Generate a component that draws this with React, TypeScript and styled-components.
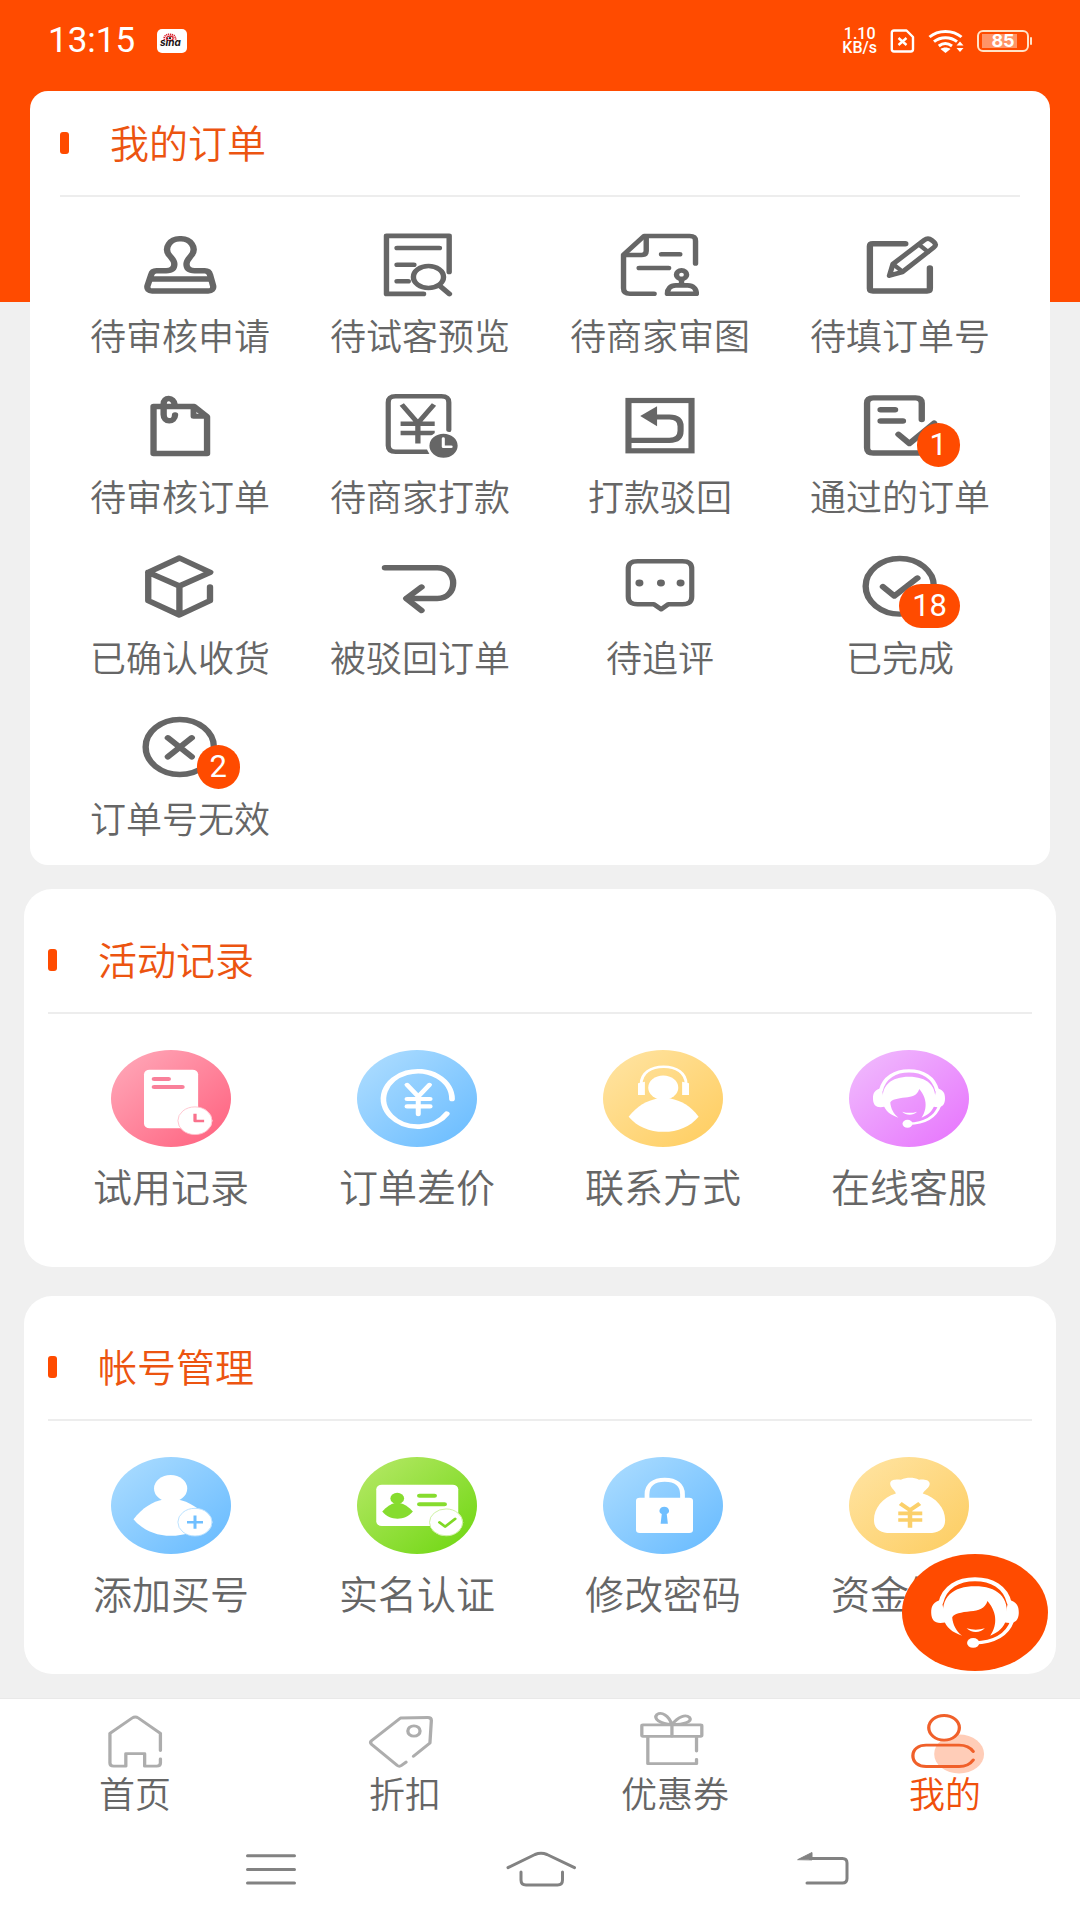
import React from "react";
import styled, { createGlobalStyle } from "styled-components";

const ORANGE = "#ff4b00";
const GREY = "#666666";
const SANS = '"Noto Sans CJK SC", "Noto Sans", sans-serif';
const TEXT_WEIGHT = 350;

const GlobalStyle = createGlobalStyle`
  * { box-sizing: border-box; }
  body {
    margin: 0;
    background: #f0f0f0;
    font-family: ${SANS};
    color: ${GREY};
  }
  a { color: inherit; text-decoration: none; }
  ul { list-style: none; margin: 0; padding: 0; }
  button { border: 0; padding: 0; background: none; cursor: pointer; }
  svg { display: block; flex: none; }
`;

const Page = styled.div`
  display: flex;
  flex-direction: column;
  min-height: 100vh;
  background: linear-gradient(${ORANGE} 302px, #f0f0f0 302px);
`;

/* ---------- status bar ---------- */

const StatusBar = styled.header`
  display: flex;
  align-items: center;
  justify-content: space-between;
  height: 91px;
  padding: 0 48px 9px;
  color: #fff;
`;

const StatusGroup = styled.div<{ $gap: number }>`
  display: flex;
  align-items: center;
  gap: ${(p) => p.$gap}px;
`;

const Clock = styled.time`
  font: 400 35px/40px Roboto, sans-serif;
`;

const Speed = styled.div`
  display: flex;
  flex-direction: column;
  align-items: center;
  font: 500 16px/14px Roboto, sans-serif;
`;

const Battery = styled.div`
  display: flex;
  align-items: center;
  gap: 1px;
`;

const BatteryBody = styled.div`
  display: flex;
  align-items: center;
  justify-content: center;
  width: 52px;
  height: 22px;
  border: 2px solid #ffe3c8;
  border-radius: 6px;
  background: linear-gradient(90deg, #ff9467 35px, transparent 35px) 3px 2px / 42px 14px no-repeat;
  font: 700 18px/18px Inter, sans-serif;
`;

const BatteryTip = styled.div`
  width: 2px;
  height: 8px;
  border-radius: 1px;
  background: #ffe3c8;
`;

/* ---------- cards ---------- */

const Main = styled.main`
  display: flex;
  flex-direction: column;
  padding: 0 24px 24px;
`;

const OrdersCard = styled.section`
  margin: 0 6px 24px;
  padding: 0 30px 26px;
  border-radius: 18px;
  background: #fff;
`;

const ServiceCard = styled.section`
  padding: 19px 24px 58px;
  border-radius: 28px;
  background: #fff;

  & + & {
    margin-top: 29px;
  }
`;

const CardHeading = styled.div`
  display: flex;
  align-items: center;
  gap: 41px;
  height: 106px;
  border-bottom: 2px solid #ededed;

  &::before {
    content: "";
    width: 9px;
    height: 22px;
    border-radius: 3px;
    background: ${ORANGE};
  }
`;

const Title = styled.h2`
  margin: 0;
  padding-bottom: 5px;
  font-size: 39px;
  font-weight: ${TEXT_WEIGHT};
  line-height: 48px;
  color: #ec5410;
`;

const OrderGrid = styled.ul`
  display: grid;
  grid-template-columns: repeat(4, 1fr);
  row-gap: 36px;
  padding-top: 34px;
`;

const OrderLink = styled.a`
  display: flex;
  flex-direction: column;
  align-items: center;
  gap: 13px;
  font-size: 36px;
  font-weight: ${TEXT_WEIGHT};
  line-height: 44px;
`;

const IconBox = styled.span`
  position: relative;
`;

const Badge = styled.span`
  position: absolute;
  top: 31px;
  right: -20px;
  min-width: 43px;
  padding: 0 13px;
  border-radius: 22px;
  background: ${ORANGE};
  color: #fff;
  text-align: center;
  font: 400 31px/44px Roboto, sans-serif;
`;

const ServiceGrid = styled.ul`
  display: grid;
  grid-template-columns: repeat(4, 1fr);
  padding-top: 36px;
`;

const ServiceLink = styled.a`
  display: flex;
  flex-direction: column;
  align-items: center;
  gap: 14px;
  font-size: 39px;
  font-weight: ${TEXT_WEIGHT};
  line-height: 48px;
`;

/* ---------- footer ---------- */

const Footer = styled.footer`
  border-top: 1px solid #e9e9e9;
  background: #fff;
`;

const TabBar = styled.nav`
  display: grid;
  grid-template-columns: repeat(4, 1fr);
  padding: 11px 0 6px;
`;

const Tab = styled.a<{ $active?: boolean }>`
  display: flex;
  flex-direction: column;
  align-items: center;
  font-size: 36px;
  font-weight: ${TEXT_WEIGHT};
  line-height: 32px;
  color: ${(p) => (p.$active ? "#f0500c" : GREY)};
`;

const SystemNav = styled.nav`
  display: grid;
  grid-template-columns: repeat(3, 1fr);
  justify-items: center;
  padding: 36px 12.5% 30px;
`;

const SupportButton = styled.button`
  position: fixed;
  right: 32px;
  bottom: 249px;
`;

/* ---------- line icons ---------- */

const Line = ({ w = 5, children }: { w?: number; children: React.ReactNode }) => (
  <svg
    width="80"
    height="68"
    viewBox="0 0 68 68"
    preserveAspectRatio="none"
    fill="none"
    stroke={GREY}
    strokeWidth={w}
    strokeLinecap="round"
    strokeLinejoin="round"
    aria-hidden="true"
  >
    {children}
  </svg>
);

const StampIcon = (
  <Line w={5.4}>
    <path d="M34.3 7.800a10.600 10.600 0 0 0-9.400 16.500c2.200 3.200 4.300 5 4.300 8.800 0 4.600-2.500 6.600-7 6.600H14c-3 0-4 1.500-4.500 4L6.300 55c-.4 3 1 5 4 5H58c3 0 4.600-2 4.200-5l-2.700-11.300c-.5-2.500-2-4-4.500-4h-8.500c-4.500 0-7-2-7-6.600 0-3.800 2-5.600 4.200-8.800A10.600 10.600 0 0 0 34.300 7.800z" />
    <path d="M9.500 48H59" />
  </Line>
);

const PreviewIcon = (
  <Line w={4.6}>
    <path d="M58.800 41V4.900H5.500v58H37" />
    <path d="M14.500 17h36M14.500 33.700h14.300M14.500 50.300H24" />
    <ellipse cx="41.200" cy="46" rx="12.800" ry="11" />
    <path d="M51 55l8 8" />
  </Line>
);

const MerchantReviewIcon = (
  <Line w={4.6}>
    <path d="M64.200 32.500V10c0-3.500-1.500-5-5-5H20.500L3 23.700v33.500c0 3.800 1.800 5.500 5.500 5.500h20.500" />
    <path d="M22.300 6v14c0 2.800-1.200 4-4 4H4" />
    <path d="M35.300 23.300h15.500M16.300 37h25" />
    <circle cx="52.300" cy="43.700" r="4.300" />
    <path d="M52.300 48v6M40.300 62.800c0-5 2.500-8.400 7.200-8.400h10c4.700 0 7.400 3.400 7.400 8.400z" />
  </Line>
);

const EditIcon = (
  <Line w={5.4}>
    <path d="M38.500 12.700H11c-1.700 0-2.600.9-2.600 2.600V57.500c0 1.700.9 2.500 2.600 2.500h46c1.600 0 2.400-.8 2.400-2.500V37" />
    <path strokeWidth="4.500" d="M25 44.700l3-11.700L54.700 9c2.200-1.900 4-1.900 6 0l2 1.900c2 2 2 3.700-.2 5.700L36 41z" />
    <path strokeWidth="3.800" d="M50 13.500l8 7.500M28.500 33.500l7.500 7" />
  </Line>
);

const ClipIcon = (
  <Line w={5.4}>
    <path d="M46 14.500H11.500v47H57V24.700z" />
    <path strokeWidth="5" d="M45.500 16v8.300H56" />
    <path d="M29.400 12.500c-.8-8-9.300-8-9.300-.5v10.500c0 8.300 9.400 8.300 9.700.5" />
  </Line>
);

const PayWaitIcon = (
  <Line w={4.4}>
    <path d="M58.500 38V10.500c0-4.300-2-6.300-6.300-6.300H13.300C9 4.200 7 6.200 7 10.500v43c0 4.300 2 6.300 6.300 6.300H41" />
    <path strokeLinecap="butt" strokeWidth="4.500" d="M18.500 12.500L32.200 31l13.700-18.500M32.200 30v21.500M17.500 31.700h29M17.500 41h29" />
    <circle cx="54" cy="53.700" r="13.200" fill={GREY} stroke="#fff" strokeWidth="2.400" />
    <path stroke="#fff" strokeWidth="2.600" d="M53.800 46.500v8.300h6.700" />
  </Line>
);

const RejectPayIcon = (
  <Line w={5.2}>
    <rect x="7.200" y="8.500" width="53.600" height="50.300" strokeLinejoin="miter" />
    <path d="M8 48.300h34c6.500 0 9.500-3.300 9.500-9.500v-4.500c0-6.200-3-9.300-9.500-9.300H30" />
    <path fill={GREY} stroke="none" d="M17.200 24l14.300-9.800v20z" />
  </Line>
);

const PassedIcon = (
  <Line w={5.4}>
    <path d="M52.500 27.500V11.200c0-3.600-1.700-5.300-5.300-5.300H11.300C7.700 5.900 6 7.600 6 11.200v44.500c0 3.600 1.700 5.300 5.300 5.300H52" />
    <path d="M17.500 17.700h12.300M17.500 29h19M32.700 42.300L42 51.500l21-20.300" />
  </Line>
);

const BoxIcon = (
  <Line w={5.4}>
    <path d="M59.700 19.300L33.500 33 7 19.300 33.500 5zM7 19.300v28.400L33.500 62l26-14.300V34M33.500 33v28" />
  </Line>
);

const RejectedIcon = (
  <Line w={5.4}>
    <path d="M4.200 14.700h44.500c18 0 18 30.800 0 30.800H23" />
    <path d="M35.300 34L22.300 45.500l13 12" />
  </Line>
);

const ReviewIcon = (
  <Line w={4.4}>
    <path d="M15 8.300h38c5.600 0 8 2.400 8 7.700v27.500c0 5.300-2.400 7.700-8 7.700H41L35 56.300l-6.200-5.100H15c-5.600 0-8-2.400-8-7.700V16c0-5.300 2.400-7.700 8-7.700z" />
    <g fill={GREY} stroke="none">
      <circle cx="16.500" cy="30" r="3.400" />
      <circle cx="34.800" cy="30" r="3.400" />
      <circle cx="51.500" cy="30" r="3.400" />
    </g>
  </Line>
);

const DoneIcon = (
  <Line w={5.4}>
    <ellipse cx="33.800" cy="33.300" rx="29" ry="27.800" />
    <path d="M19.500 33.700l9.700 9.300L48.800 25" />
  </Line>
);

const InvalidIcon = (
  <Line w={5.4}>
    <ellipse cx="33.800" cy="33" rx="29" ry="27.500" />
    <path d="M23.700 23.800l20.300 19M44 23.800l-20.300 19" />
  </Line>
);

/* ---------- round icons ---------- */

const Disc = ({
  id,
  from,
  to,
  width = 120,
  height = 97,
  children,
}: {
  id: string;
  from: string;
  to: string;
  width?: number;
  height?: number;
  children: React.ReactNode;
}) => (
  <svg
    width={width}
    height={height}
    viewBox="0 0 96 96"
    preserveAspectRatio="none"
    fill="none"
    strokeLinecap="round"
    strokeLinejoin="round"
    aria-hidden="true"
  >
    <defs>
      <linearGradient id={id} x1="0.15" y1="0.15" x2="0.85" y2="0.85">
        <stop offset="0" stopColor={from} />
        <stop offset="1" stopColor={to} />
      </linearGradient>
    </defs>
    <circle cx="48" cy="48" r="48" fill={`url(#${id})`} />
    {children}
  </svg>
);

const HeadsetLady = (
  <g>
    <path
      fill="#fff"
      d="M27.500 54C24.500 35 34 26.500 48 26.500S71.500 35 68.500 54c-1.500 6-5 10.500-10.500 13 4-7 5.500-18-1.800-28.500C54.500 45 50.500 46.300 45 47c-6 .8-11 2-12 5 .5 6 2.500 11 6.500 15-6.500-2.500-10.500-7-12-13z"
    />
    <path fill="#fff" d="M26 37.500c-5 1.500-7 4.500-6.800 11 .2 7 3.300 9.500 9.800 7.500zM70 37.500c5 1.500 7 4.500 6.800 11-.2 7-3.300 9.500-9.800 7.500z" />
    <path stroke="#fff" strokeWidth="3.200" d="M25.500 40C28 27 37 20.700 48 20.700S68 27 70.500 40" />
    <path stroke="#fff" strokeWidth="2.400" d="M72.500 55C69 67 60 72.500 47.500 73" />
    <circle cx="46.800" cy="73" r="4" fill="#fff" />
    <path fill="#fff" d="M42.500 61c4 1.600 8 1.600 12 0-3 4-9 4-12 0z" />
  </g>
);

const TrialIcon = (
  <Disc id="trial" from="#ffa0b2" to="#ff6a86">
    <rect x="26.400" y="19.500" width="43.300" height="58" rx="4.500" fill="#fff" />
    <path stroke="#f9809a" strokeWidth="4" d="M34.500 28.700h11.500M34.500 36.700H57" />
    <circle cx="67.200" cy="70" r="13.700" fill="#fff" stroke="#ffc2cd" strokeWidth="0.800" />
    <path stroke="#f9718c" strokeWidth="2.600" strokeLinecap="butt" d="M67.200 63v7.300h7.300" />
  </Disc>
);

const PriceIcon = (
  <Disc id="price" from="#a6d9ff" to="#72c0ff">
    <path stroke="#fff" strokeWidth="4.600" d="M76 48.500A27.400 27.400 0 1 0 71.800 63" />
    <path stroke="#fff" strokeWidth="4" d="M40 34.500L49 46l9-11.500M49 46v17.500M40 48.500h18.500M40 55.800h18.500" />
  </Disc>
);

const ContactIcon = (
  <Disc id="contact" from="#ffe19a" to="#ffd068">
    <circle cx="48.200" cy="37.300" r="12" fill="#fff" />
    <path fill="#fff" d="M20.500 66c6.500-10.500 15-16 23-18h10.500c8 2 16.500 7.500 22.500 18-7 10-16.500 15-28 15s-21-5-28-15z" />
    <path stroke="#fff" strokeWidth="2.400" d="M30.500 34c0-11.500 8-17.500 18-17.500s18 6 18 17.500" />
    <path fill="#fff" d="M28 33l5.500-1.500v13H28zM68.800 33l-5.500-1.500v13h5.500z" />
  </Disc>
);

const OnlineIcon = (
  <Disc id="online" from="#efb3fd" to="#e87dfd">
    {HeadsetLady}
  </Disc>
);

const AddBuyerIcon = (
  <Disc id="buyer" from="#a3d8ff" to="#70bfff">
    <circle cx="47.700" cy="31.200" r="13.300" fill="#fff" />
    <path fill="#fff" d="M18 61.500c7-11 15-17.500 24-19.500h11.500C62 44 71 50.500 78 61.500 70.500 72.500 60 78 48 78s-22.500-5.500-30-16.500z" />
    <circle cx="67.200" cy="64.500" r="13.700" fill="#fff" stroke="#b5dfff" strokeWidth="0.800" />
    <path stroke="#70bfff" strokeWidth="2.400" strokeLinecap="butt" d="M67.200 58v13M60.800 64.500h12.800" />
  </Disc>
);

const IdentityIcon = (
  <Disc id="identity" from="#ade65c" to="#78d91c">
    <rect x="15.400" y="27.400" width="65.600" height="41" rx="4.500" fill="#fff" />
    <g fill="#86dc2e">
      <circle cx="32.200" cy="41" r="5.500" />
      <path d="M20.200 54c3.500-5 7-7.500 10-8.500h4c3.500 1 7 3.500 10.500 8.500-3.500 5-7.500 7-12.300 7s-8.900-2-12.200-7z" />
    </g>
    <path stroke="#86dc2e" strokeWidth="4" d="M50 38.300h12M50 46.700h20" />
    <circle cx="71.300" cy="64.700" r="13.300" fill="#fff" stroke="#c9f09a" strokeWidth="0.800" />
    <path stroke="#80d926" strokeWidth="2.400" d="M66 64.700l4.500 4.300 8-7.800" />
  </Disc>
);

const PasswordIcon = (
  <Disc id="password" from="#a3d8ff" to="#70bfff">
    <rect x="26.400" y="40.300" width="45.600" height="35" rx="3" fill="#fff" />
    <path stroke="#fff" strokeWidth="3.800" d="M35.200 42v-5c0-9.500 5.500-14.500 14.200-14.500S63.600 27.500 63.600 37v5" />
    <path fill="#70bfff" d="M49 49.300a3.900 3.900 0 0 1 2 7.200l.9 9.500h-5.800l.9-9.500a3.900 3.900 0 0 1 2-7.200z" />
  </Disc>
);

const FundsIcon = (
  <Disc id="funds" from="#ffe19a" to="#fdd06a">
    <path
      fill="#fff"
      d="M37.500 36c-1-3.500-5-6-4.500-10.500.5-3.200 5-3.500 8.500-3 5-2.500 10-2.500 14.500 0 4-.5 8 .2 8.500 3.500.5 4-4 6.500-5.500 10C70 40 77 51 76.900 62c0 9-4.500 13.300-13 13.300H33c-8.500 0-13-4.300-13-13.300 0-11 6.500-22 17.500-26z"
    />
    <path stroke="#fbd06a" strokeWidth="3.600" strokeLinecap="butt" d="M41 46l7.800 6.500L56.600 46M48.800 52v18M39.400 55.800h19.200M39.400 62.300h19.200" />
  </Disc>
);

/* ---------- tab icons ---------- */

const TabGlyph = ({ color = "#adadad", children }: { color?: string; children: React.ReactNode }) => (
  <svg
    width="80"
    height="66"
    viewBox="0 0 68 66"
    preserveAspectRatio="none"
    fill="none"
    stroke={color}
    strokeWidth="2.800"
    strokeLinecap="round"
    strokeLinejoin="round"
    aria-hidden="true"
  >
    {children}
  </svg>
);

const HomeTabIcon = (
  <TabGlyph>
    <path d="M55.600 40.500V23.300L36.800 8q-2.600-2-5.200 0L12.700 23.300V53q0 3.200 3.200 3.200h10.300V43.700h16v12.500h10.200q3.200 0 3.200-3.200v-4" />
  </TabGlyph>
);

const DiscountTabIcon = (
  <TabGlyph>
    <path d="M41.200 46.300l14-13.300 1.200-22.500q0-3-3-3L30.200 8 5.500 30.700q-1.500 1.800 0 3.500L27.500 55.500q1.700 1.500 3.400 0l4-3.400" />
    <circle cx="41.600" cy="21" r="5.200" />
  </TabGlyph>
);

const CouponTabIcon = (
  <TabGlyph>
    <rect x="5.800" y="14.900" width="51" height="11.400" rx="1" />
    <path d="M31.400 15v11M10.900 27v26.700h41.400v-4.200M52.300 27v14M31.400 14.500C28.500 5 22.500 1.500 18.700 4.500c-3.500 4 2.500 9.500 12.700 10zM31.400 14.500c5.500-8 11.500-10.500 15-7 2.500 4-4 7-15 7z" />
  </TabGlyph>
);

const MineTabIcon = (
  <TabGlyph color="#f0602a">
    <ellipse cx="46" cy="44" rx="21.200" ry="19.500" fill="#ffcdb8" stroke="none" />
    <ellipse cx="33.200" cy="17.800" rx="13" ry="12.300" fill="#fff" />
    <path d="M58 41.500c-2.500-4-6-6.300-12-6.300H18c-6.500 0-11.300 4-11.300 10.600S11.500 56.500 18 56.500h28c6 0 9.500-2.500 12-6.500" />
  </TabGlyph>
);

/* ---------- system icons ---------- */

const SystemGlyph = ({ children }: { children: React.ReactNode }) => (
  <svg width="80" height="40" viewBox="0 0 80 40" fill="none" stroke="#828282" strokeWidth="3" strokeLinecap="round" strokeLinejoin="round" aria-hidden="true">
    {children}
  </svg>
);

const SinaMark = () => (
  <svg width="30" height="24" viewBox="0 0 30 24" role="img" aria-label="sina">
    <rect width="30" height="24" rx="5" fill="#fff" />
    <g fill="none" stroke="#d8202a" strokeWidth="1.200">
      <path d="M7.500 11C6.500 7 9 5.200 13 5.400S19 7.500 18.500 11" strokeWidth="1.800" strokeDasharray="1.200 0.700" />
      <ellipse cx="12.800" cy="9.300" rx="3.400" ry="2.200" />
    </g>
    <circle cx="13" cy="9.200" r="1.100" fill="#111" />
    <text x="3" y="17" fontFamily="Inter, sans-serif" fontSize="10" fontWeight="700" fontStyle="italic" fill="#1b1313">
      sina
    </text>
  </svg>
);

const SimIcon = () => (
  <svg width="25" height="24" viewBox="0 0 25 24" fill="none" stroke="#fff" strokeWidth="2.400" strokeLinejoin="round" aria-hidden="true">
    <path d="M4 1.500h12.500L23 8v12.300q0 2.200-2.200 2.200H4q-2.200 0-2.200-2.200V3.700Q1.800 1.500 4 1.500z" />
    <path d="M8.500 9l8 7M16.500 9l-8 7" />
  </svg>
);

const WifiIcon = () => (
  <svg width="36" height="24" viewBox="0 0 36 24" fill="none" stroke="#fff" strokeWidth="3" aria-hidden="true">
    <path d="M1.500 8C10 .5 25 .5 33.500 8M6 12.700c6.500-5.400 16.500-5.400 23 0M10.800 17c4-3.200 9-3.200 13.200 0" />
    <path fill="#fff" stroke="none" d="M12.500 20c3-2 7-2 10 0l-5 4zM32 12.500l3.500 4h-7zM32 23l3.500-4h-7z" />
  </svg>
);

/* ---------- data ---------- */

const orders: { label: string; icon: React.ReactNode; count?: number }[] = [
  { label: "待审核申请", icon: StampIcon },
  { label: "待试客预览", icon: PreviewIcon },
  { label: "待商家审图", icon: MerchantReviewIcon },
  { label: "待填订单号", icon: EditIcon },
  { label: "待审核订单", icon: ClipIcon },
  { label: "待商家打款", icon: PayWaitIcon },
  { label: "打款驳回", icon: RejectPayIcon },
  { label: "通过的订单", icon: PassedIcon, count: 1 },
  { label: "已确认收货", icon: BoxIcon },
  { label: "被驳回订单", icon: RejectedIcon },
  { label: "待追评", icon: ReviewIcon },
  { label: "已完成", icon: DoneIcon, count: 18 },
  { label: "订单号无效", icon: InvalidIcon, count: 2 },
];

const services = [
  {
    title: "活动记录",
    items: [
      { label: "试用记录", icon: TrialIcon },
      { label: "订单差价", icon: PriceIcon },
      { label: "联系方式", icon: ContactIcon },
      { label: "在线客服", icon: OnlineIcon },
    ],
  },
  {
    title: "帐号管理",
    items: [
      { label: "添加买号", icon: AddBuyerIcon },
      { label: "实名认证", icon: IdentityIcon },
      { label: "修改密码", icon: PasswordIcon },
      { label: "资金管理", icon: FundsIcon },
    ],
  },
];

const tabs = [
  { label: "首页", icon: HomeTabIcon },
  { label: "折扣", icon: DiscountTabIcon },
  { label: "优惠券", icon: CouponTabIcon },
  { label: "我的", icon: MineTabIcon, active: true },
];

export default function App() {
  return (
    <Page>
      <GlobalStyle />
      <StatusBar>
        <StatusGroup $gap={22}>
          <Clock>13:15</Clock>
          <SinaMark />
        </StatusGroup>
        <StatusGroup $gap={13}>
          <Speed>
            <span>1.10</span>
            <span>KB/s</span>
          </Speed>
          <SimIcon />
          <WifiIcon />
          <Battery>
            <BatteryBody>85</BatteryBody>
            <BatteryTip />
          </Battery>
        </StatusGroup>
      </StatusBar>

      <Main>
        <OrdersCard>
          <CardHeading>
            <Title>我的订单</Title>
          </CardHeading>
          <OrderGrid>
            {orders.map((o) => (
              <li key={o.label}>
                <OrderLink href="#">
                  <IconBox>
                    {o.icon}
                    {o.count !== undefined && <Badge>{o.count}</Badge>}
                  </IconBox>
                  {o.label}
                </OrderLink>
              </li>
            ))}
          </OrderGrid>
        </OrdersCard>

        {services.map((s) => (
          <ServiceCard key={s.title}>
            <CardHeading>
              <Title>{s.title}</Title>
            </CardHeading>
            <ServiceGrid>
              {s.items.map((i) => (
                <li key={i.label}>
                  <ServiceLink href="#">
                    {i.icon}
                    {i.label}
                  </ServiceLink>
                </li>
              ))}
            </ServiceGrid>
          </ServiceCard>
        ))}
      </Main>

      <SupportButton type="button" aria-label="在线客服">
        <Disc id="support" from={ORANGE} to={ORANGE} width={146} height={117}>
          {HeadsetLady}
        </Disc>
      </SupportButton>

      <Footer>
        <TabBar>
          {tabs.map((t) => (
            <Tab key={t.label} href="#" $active={t.active}>
              {t.icon}
              {t.label}
            </Tab>
          ))}
        </TabBar>
        <SystemNav>
          <button type="button" aria-label="菜单">
            <SystemGlyph>
              <path d="M17.500 5.700h47M17.500 19.400h47M17.500 33h47" />
            </SystemGlyph>
          </button>
          <button type="button" aria-label="主页">
            <SystemGlyph>
              <path d="M8 17.700L35 4.500q6-2.500 12 0l27.500 13.200M21 22v8q0 5 5 5h31.500q5 0 5-5v-8" />
            </SystemGlyph>
          </button>
          <button type="button" aria-label="返回">
            <SystemGlyph>
              <path d="M37 33h35.500q4.500 0 4.500-4.500V13q0-4.500-4.500-4.500H40" />
              <path fill="#828282" strokeWidth="1" d="M28 9.500l14-7v7z" />
            </SystemGlyph>
          </button>
        </SystemNav>
      </Footer>
    </Page>
  );
}
